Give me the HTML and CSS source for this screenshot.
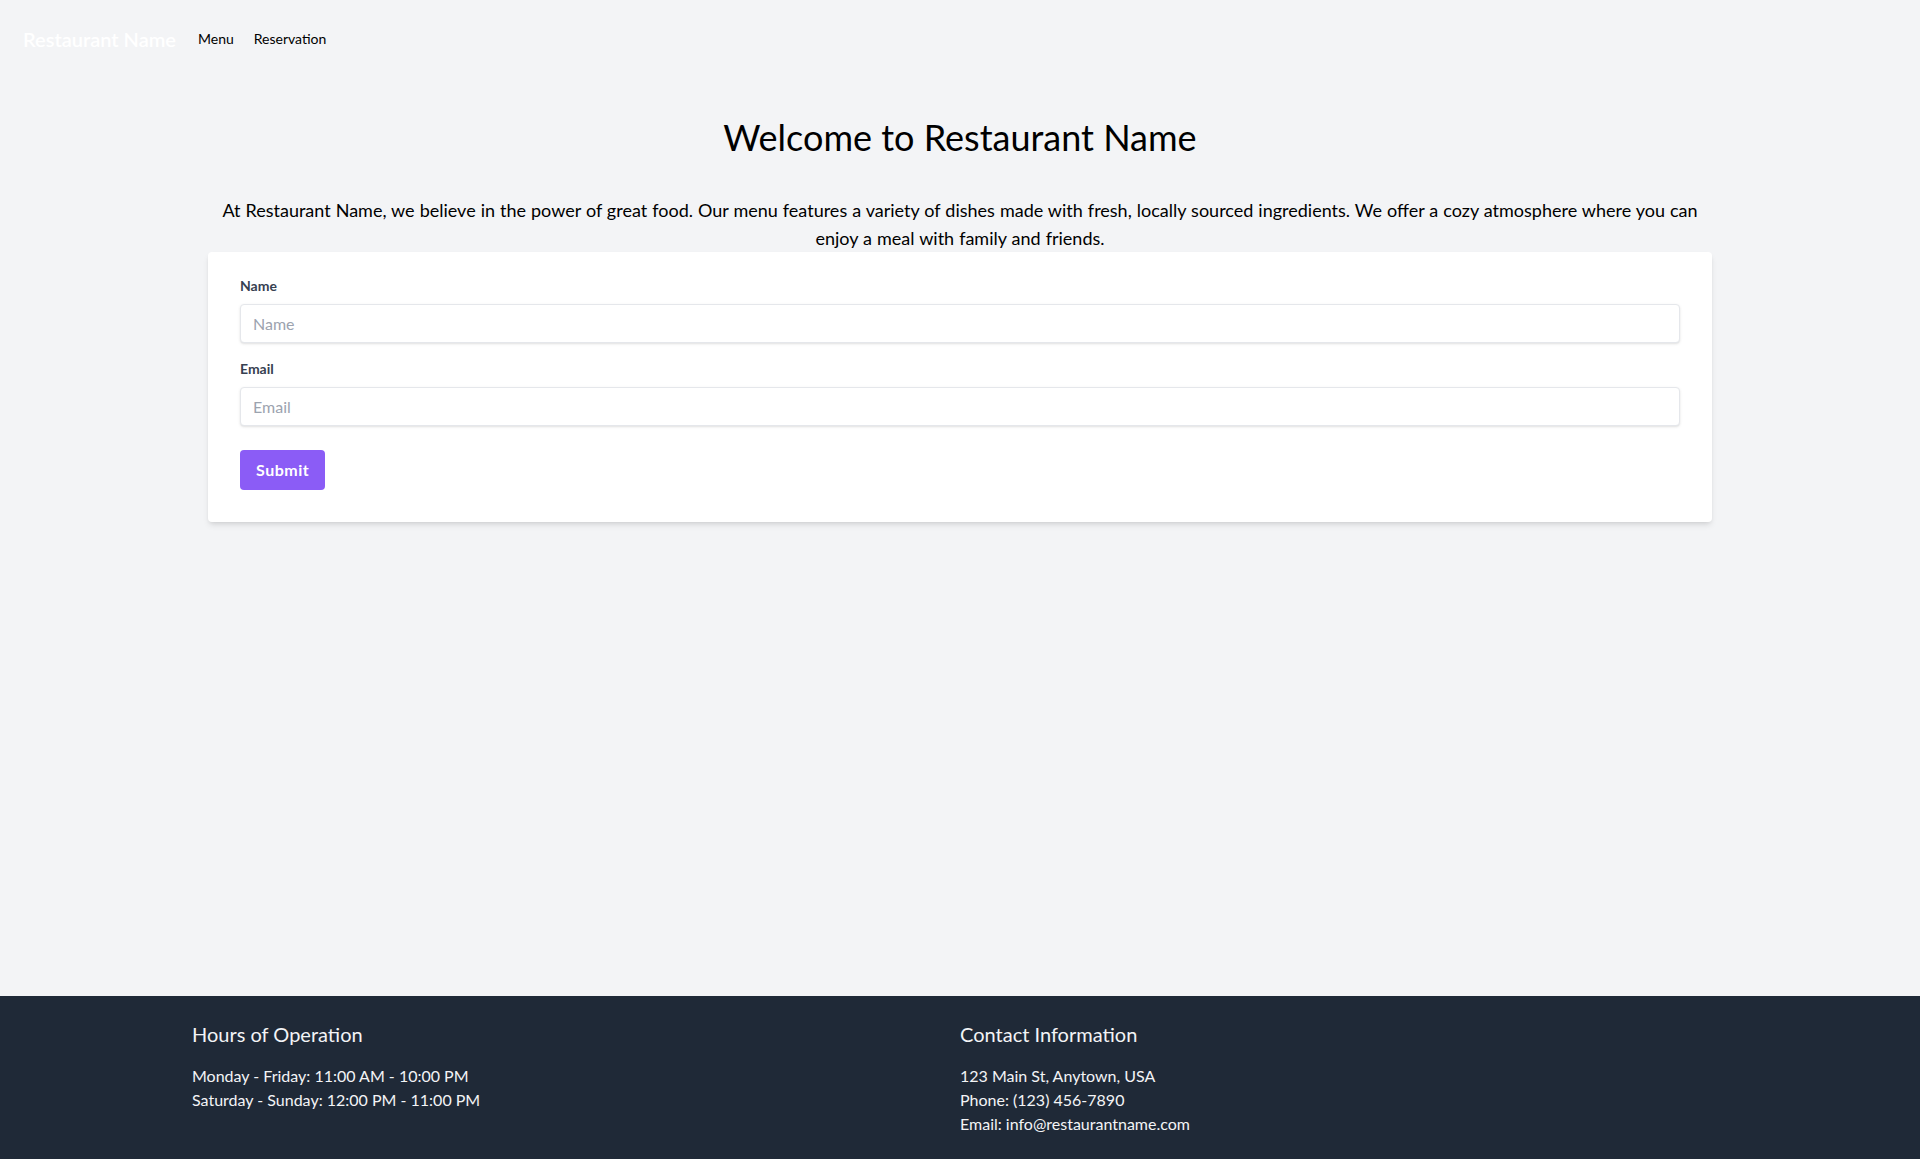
FILE: index.html
```html
<!DOCTYPE html>
<html lang="en">
<head>
<meta charset="utf-8">
<title>Restaurant Name</title>
<link rel="stylesheet" href="styles.css">
</head>
<body>
<header class="site-header">
  <nav class="nav">
    <a class="brand" href="#">Restaurant Name</a>
    <a class="nav-link" href="#">Menu</a>
    <a class="nav-link" href="#">Reservation</a>
  </nav>
</header>
<main class="main">
  <div class="container main-inner">
    <h1 class="title">Welcome to Restaurant Name</h1>
    <p class="intro">At Restaurant Name, we believe in the power of great food. Our menu features a variety of dishes made with fresh, locally sourced ingredients. We offer a cozy atmosphere where you can enjoy a meal with family and friends.</p>
    <form class="card">
      <div class="field">
        <label class="label" for="name">Name</label>
        <input class="input" id="name" type="text" placeholder="Name">
      </div>
      <div class="field field-last">
        <label class="label" for="email">Email</label>
        <input class="input" id="email" type="email" placeholder="Email">
      </div>
      <button class="btn" type="button">Submit</button>
    </form>
  </div>
</main>
<footer class="footer">
  <div class="container footer-grid">
    <div class="footer-col">
      <h2 class="footer-title">Hours of Operation</h2>
      <p class="footer-line">Monday - Friday: 11:00 AM - 10:00 PM</p>
      <p class="footer-line">Saturday - Sunday: 12:00 PM - 11:00 PM</p>
    </div>
    <div class="footer-col">
      <h2 class="footer-title">Contact Information</h2>
      <p class="footer-line">123 Main St, Anytown, USA</p>
      <p class="footer-line">Phone: (123) 456-7890</p>
      <p class="footer-line">Email: info@restaurantname.com</p>
    </div>
  </div>
</footer>
</body>
</html>
```

FILE: styles.css
```css
* { box-sizing: border-box; }
html, body { margin: 0; padding: 0; }
body {
  font-family: Lato, "Open Sans", "Noto Sans", sans-serif;
  background: #f3f4f6;
  color: #000;
  min-height: 100vh;
  display: flex;
  flex-direction: column;
}
a { text-decoration: none; color: inherit; }

.site-header { padding: 25px 23px 23px; }
.nav { display: flex; align-items: center; }
.brand {
  color: #fff;
  font-size: 20px;
  line-height: 28px;
  font-weight: 600;
  margin-right: 22px;
}
.nav-link {
  font-size: 14px;
  line-height: 20px;
  color: #000;
  margin-right: 20px;
}

.main { flex: 1; }
.container { max-width: 1536px; margin: 0 auto; width: 100%; }
.main-inner { padding: 0 16px; }
.title {
  font-size: 36px;
  line-height: 40px;
  font-weight: 400;
  text-align: center;
  margin: 41px 0 39px;
}
.intro {
  font-size: 18px;
  line-height: 28px;
  text-align: center;
  margin: 0;
  word-spacing: 0.4px;
}
.card {
  background: #fff;
  border-radius: 4px;
  box-shadow: 0 4px 6px -1px rgba(0,0,0,.1), 0 2px 4px -2px rgba(0,0,0,.1);
  padding: 24px 32px 32px;
  margin-bottom: 16px;
}
.field { margin-bottom: 16px; }
.field-last { margin-bottom: 24px; }
.label {
  display: block;
  color: #374151;
  font-size: 14px;
  line-height: 20px;
  font-weight: 700;
  margin-bottom: 8px;
}
.input {
  display: block;
  width: 100%;
  border: 1px solid #e5e7eb;
  border-radius: 4px;
  box-shadow: 0 1px 3px 0 rgba(0,0,0,.1), 0 1px 2px -1px rgba(0,0,0,.1);
  padding: 9px 12px 8px;
  font-family: inherit;
  font-size: 16px;
  line-height: 20px;
  color: #374151;
  background: #fff;
  outline: none;
}
.input::placeholder { color: #9ca3af; }
.btn {
  background: #8b5cf6;
  color: #fff;
  font-family: inherit;
  font-weight: 700;
  font-size: 16px;
  line-height: 24px;
  padding: 8px 16px;
  letter-spacing: 0.5px;
  border: 0;
  border-radius: 4px;
  cursor: pointer;
}

.footer {
  background: #1f2937;
  color: #f3f4f6;
  padding: 24px 0 23px;
}
.footer-grid { display: grid; grid-template-columns: 1fr 1fr; }
.footer-title {
  font-size: 20px;
  line-height: 28px;
  font-weight: 400;
  margin: 0 0 16px;
}
.footer-line {
  font-size: 16px;
  line-height: 24px;
  margin: 0;
}
```
